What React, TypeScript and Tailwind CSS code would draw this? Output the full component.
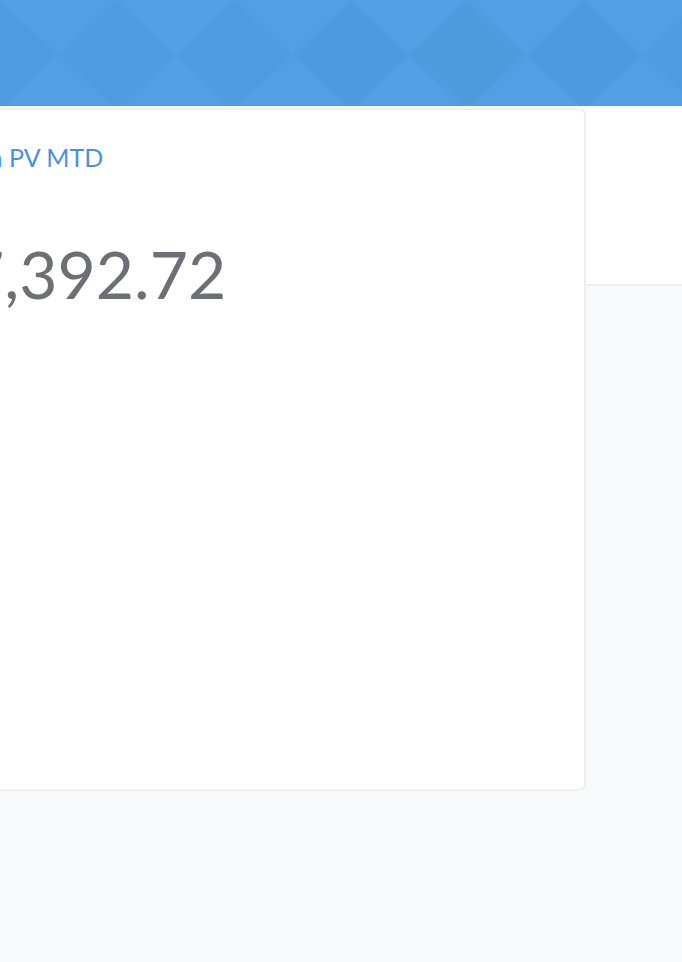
const diamonds = [0, 117, 234, 351, 467, 584, 701]
const shades = ['#4f9de0', '#4f9ce0', '#4f9de0', '#4e9cdf', '#4e9bde', '#4e9cdf', '#4f9de0']

function HeaderPattern() {
  return (
    <svg width="100%" height="106" viewBox="0 0 682 106" preserveAspectRatio="none" className="block">
      <rect width="682" height="106" fill="#52a0e3" />
      {diamonds.map((c, i) => (
        <polygon key={c} points={`${c},0 ${c + 58},55 ${c},110 ${c - 58},55`} fill={shades[i]} />
      ))}
    </svg>
  )
}

export default function App() {
  return (
    <div className="min-h-[962px] w-[682px] overflow-hidden bg-[#f8f9fb] font-['Lato','Liberation_Sans',sans-serif]">
      {/* Top banner */}
      <div className="h-[106px]">
        <HeaderPattern />
      </div>

      {/* White band under the banner */}
      <div className="h-[180px] bg-white border-b-2 border-[#efefef]" />

      {/* Stat card */}
      <div className="-mt-[180px] pt-[2px] flex">
        <div className="-ml-[74px] w-[660px] h-[683px] shrink-0 bg-white border-2 border-[#efefef] rounded-[7px] pt-[32px] pl-[24px]">
          <div className="text-[25px] leading-[1.2] text-[#4a90e2] whitespace-nowrap">Gain PV MTD</div>
          <div className="mt-[69px] pl-[14px] text-[66px] leading-none text-[#6e6f74] whitespace-nowrap">7,392.72</div>
        </div>
      </div>
    </div>
  )
}
